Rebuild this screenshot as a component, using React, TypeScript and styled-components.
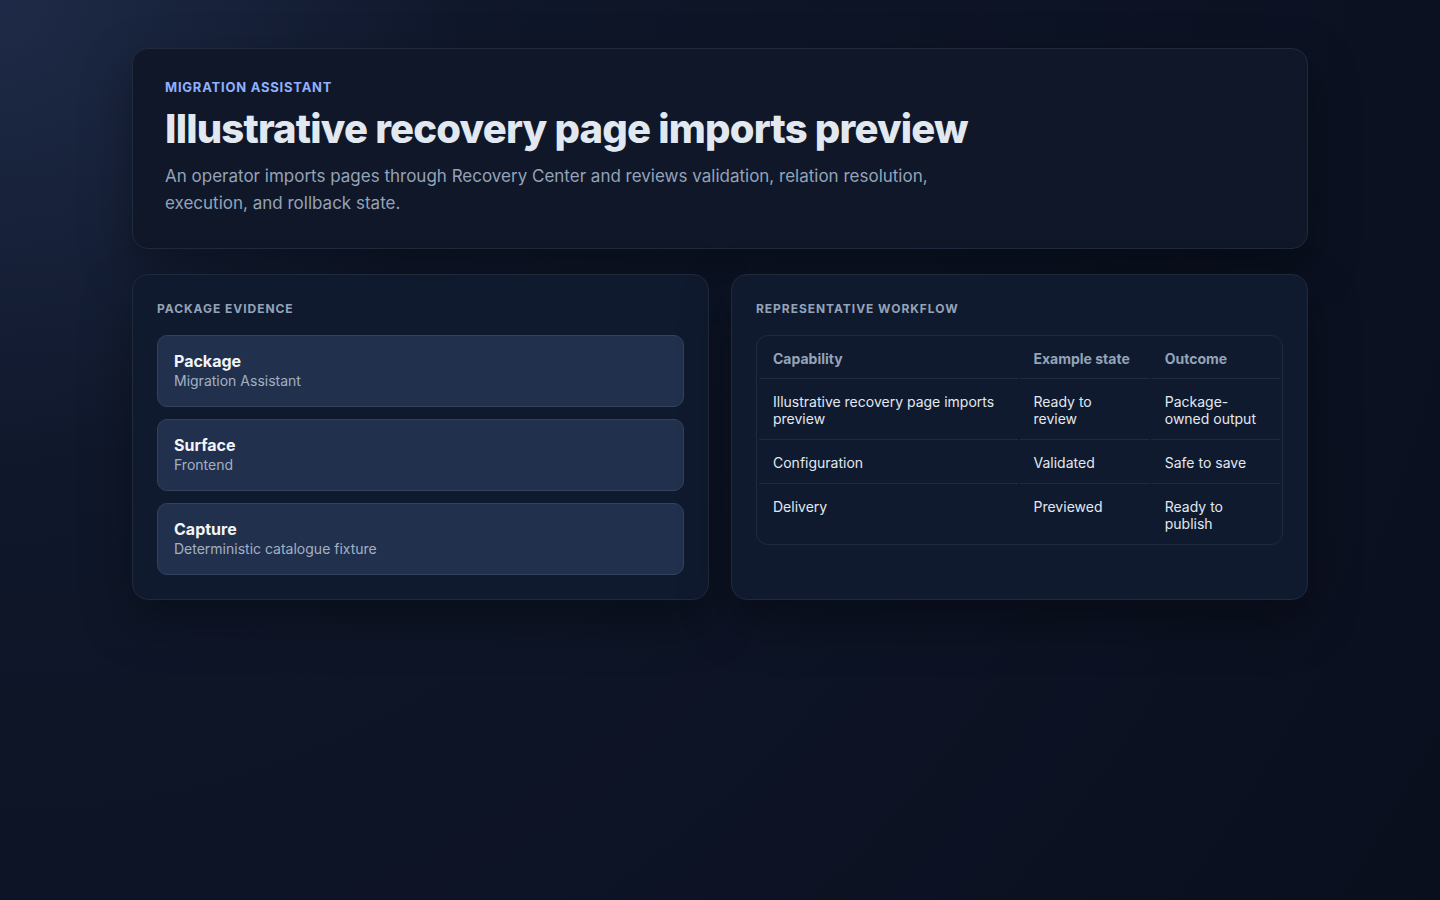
import styled, { createGlobalStyle } from 'styled-components';

const GlobalStyle = createGlobalStyle`
  html, body { margin: 0; min-height: 100%; }
  body {
    font-family: Inter, "Noto Sans", sans-serif;
    background: radial-gradient(circle at 0% 0%, #1e2a47 0%, #0f172a 28%, #0a0f1e 100%);
    min-height: 900px;
    color: #e2e8f0;
  }
`;

const evidence = [
  { title: 'Package', value: 'Migration Assistant' },
  { title: 'Surface', value: 'Frontend' },
  { title: 'Capture', value: 'Deterministic catalogue fixture' },
];

const rows = [
  ['Illustrative recovery page imports preview', 'Ready to review', 'Package-owned output'],
  ['Configuration', 'Validated', 'Safe to save'],
  ['Delivery', 'Previewed', 'Ready to publish'],
];

const App = () => {
  return (
    <>
      <GlobalStyle />
      <Page>
        <Hero>
          <Eyebrow>Migration Assistant</Eyebrow>
          <Title>Illustrative recovery page imports preview</Title>
          <Lead>
            An operator imports pages through Recovery Center and reviews validation, relation resolution, execution,
            and rollback state.
          </Lead>
        </Hero>
        <Columns>
          <Card>
            <SectionLabel>Package evidence</SectionLabel>
            <ItemList>
              {evidence.map((e) => (
                <Item key={e.title}>
                  <ItemTitle>{e.title}</ItemTitle>
                  <ItemValue>{e.value}</ItemValue>
                </Item>
              ))}
            </ItemList>
          </Card>
          <Card>
            <SectionLabel>Representative workflow</SectionLabel>
            <TableWrap>
              <Table>
                <colgroup>
                  <col style={{ width: '50%' }} />
                  <col style={{ width: '25%' }} />
                  <col style={{ width: '25%' }} />
                </colgroup>
                <thead>
                  <tr>
                    <Th>Capability</Th>
                    <Th>Example state</Th>
                    <Th>Outcome</Th>
                  </tr>
                </thead>
                <tbody>
                  {rows.map((r, i) => (
                    <tr key={i}>
                      {r.map((c) => (
                        <Td key={c} $last={i === rows.length - 1}>{c}</Td>
                      ))}
                    </tr>
                  ))}
                </tbody>
              </Table>
            </TableWrap>
          </Card>
        </Columns>
      </Page>
    </>
  );
};

export default App;

const Page = styled.div`
  width: 1176px;
  margin: 0 auto;
  padding: 48px 0;
  display: flex;
  flex-direction: column;
  gap: 25px;
`;

const Hero = styled.section`
  background: #0f1729;
  border: 1px solid #1f2a3d;
  border-radius: 16px;
  padding: 30px 32px 31px;
  box-shadow: 0 20px 50px rgba(0, 0, 0, 0.35);
`;

const Eyebrow = styled.div`
  font-size: 13px;
  font-weight: 700;
  letter-spacing: 0.06em;
  text-transform: uppercase;
  color: #8fb0ff;
`;

const Title = styled.h1`
  margin: 10px 0 10px;
  font-size: 40px;
  line-height: 1.2;
  font-weight: 800;
  letter-spacing: -0.02em;
  color: #e2e8f0;
`;

const Lead = styled.p`
  margin: 0;
  max-width: 820px;
  font-size: 17px;
  line-height: 27px;
  color: #94a3b8;
`;

const Columns = styled.div`
  display: grid;
  grid-template-columns: 1fr 1fr;
  gap: 22px;
`;

const Card = styled.section`
  background: #0f1a2e;
  border: 1px solid #1f2a3d;
  border-radius: 16px;
  padding: 26px 24px 24px;
  box-shadow: 0 20px 50px rgba(0, 0, 0, 0.35);
`;

const SectionLabel = styled.div`
  font-size: 12px;
  font-weight: 700;
  letter-spacing: 0.08em;
  text-transform: uppercase;
  color: #94a3b8;
  margin-bottom: 19px;
`;

const ItemList = styled.div`
  display: flex;
  flex-direction: column;
  gap: 12px;
`;

const Item = styled.div`
  background: #21304d;
  border: 1px solid #33415c;
  border-radius: 10px;
  padding: 16px 16px 16px;
`;

const ItemTitle = styled.div`
  font-size: 16px;
  font-weight: 700;
  color: #f1f5f9;
  line-height: 19px;
`;

const ItemValue = styled.div`
  font-size: 14px;
  color: #a3b0c4;
  line-height: 19px;
`;

const TableWrap = styled.div`
  border: 1px solid #1f2a3d;
  border-radius: 12px;
  overflow: hidden;
`;

const Table = styled.table`
  width: 100%;
  border-collapse: separate;
  border-spacing: 2px 0;
  font-size: 14px;
  table-layout: fixed;
`;

const Th = styled.th`
  text-align: left;
  vertical-align: top;
  font-weight: 700;
  color: #94a3b8;
  padding: 14px 14px 11px;
  line-height: 17px;
  border-bottom: 1px solid #1f2a3d;
`;

const Td = styled.td<{ $last: boolean }>`
  vertical-align: top;
  color: #e2e8f0;
  padding: 14px 14px 12px;
  line-height: 17px;
  border-bottom: ${({ $last }) => ($last ? 'none' : '1px solid #1f2a3d')};
`;
